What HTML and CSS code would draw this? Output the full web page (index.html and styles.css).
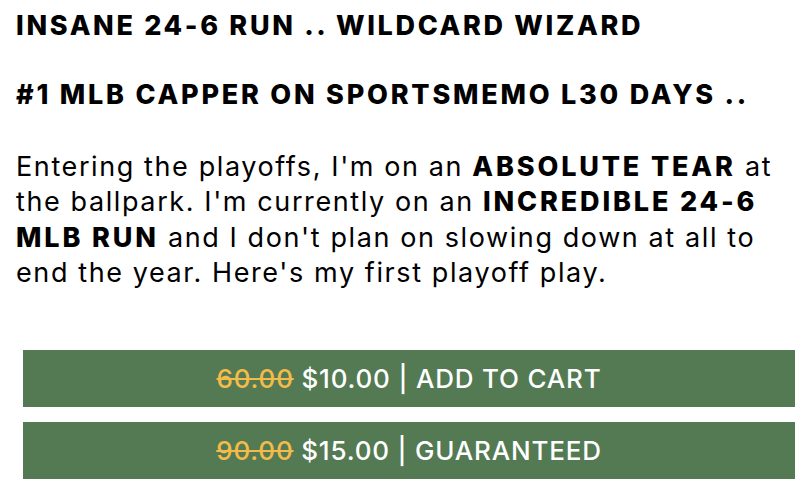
FILE: index.html
```html
<!DOCTYPE html>
<html>
<head>
<meta charset="utf-8">
<link rel="stylesheet" href="styles.css">
</head>
<body>
<div class="content">
  <h3 class="headline">INSANE 24-6 RUN .. WILDCARD WIZARD</h3>
  <h3 class="headline second">#1 MLB CAPPER ON SPORTSMEMO L30 DAYS ..</h3>
  <p class="body-text">Entering the playoffs, I'm on an <strong>ABSOLUTE TEAR</strong> at the ballpark. I'm currently on an <strong>INCREDIBLE 24-6 MLB RUN</strong> and I don't plan on slowing down at all to end the year. Here's my first playoff play.</p>
</div>
<div class="buttons">
  <a class="buy-btn"><del class="old">60.00</del> $10.00 | ADD TO CART</a>
  <a class="buy-btn"><del class="old">90.00</del> $15.00 | GUARANTEED</a>
</div>
</body>
</html>
```
FILE: styles.css
```css
html, body {
  margin: 0;
  padding: 0;
  background: #ffffff;
}
body {
  font-family: Inter, "Noto Sans", sans-serif;
  color: #000;
}
.content {
  padding: 8px 16px 0 16px;
}
.headline {
  margin: 0;
  font-size: 27px;
  line-height: 36px;
  font-weight: 800;
  letter-spacing: 2.67px;
  white-space: nowrap;
}
.headline.second {
  margin-top: 33px;
  letter-spacing: 2.77px;
}
.body-text {
  margin: 36px 0 0 0;
  font-size: 27px;
  line-height: 35.4px;
  letter-spacing: 1.6px;
}
.body-text strong {
  font-weight: 800;
  letter-spacing: 2.85px;
}
.buttons {
  margin-top: 59px;
  padding: 0 7px 0 23px;
  display: flex;
  flex-direction: column;
  gap: 15px;
}
.buy-btn {
  display: flex;
  align-items: center;
  justify-content: center;
  height: 57px;
  background: #537a52;
  color: #ffffff;
  font-size: 26px;
  font-weight: 500;
  letter-spacing: 0.8px;
  white-space: pre;
}
.old {
  color: #f3bb4a;
  text-decoration: line-through;
}
```
